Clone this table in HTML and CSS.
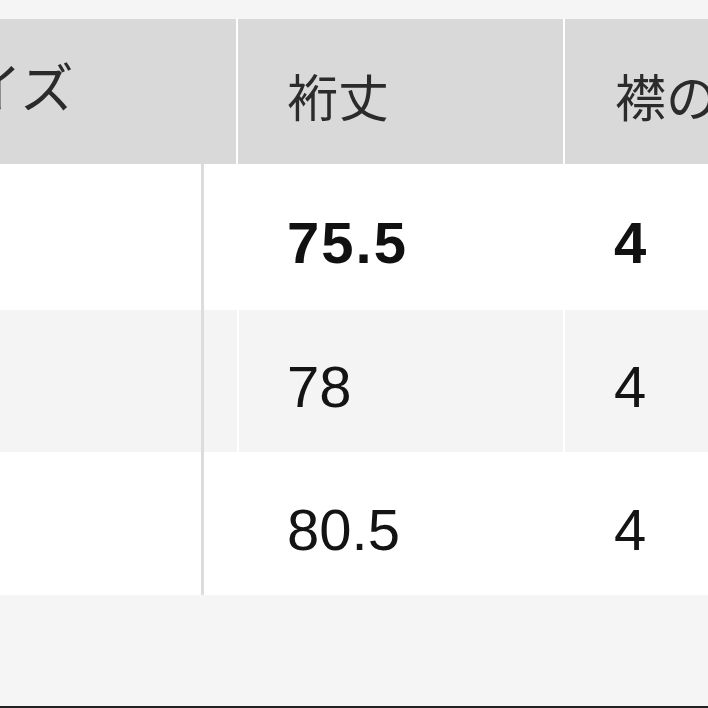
FILE: index.html
```html
<!DOCTYPE html>
<html lang="ja">
<head>
<meta charset="utf-8">
<title>サイズ表</title>
<link rel="stylesheet" href="styles.css">
</head>
<body>
<div class="page">
  <div class="strip"></div>
  <div class="head">
    <div class="hcell h0"><span class="h0text">サイズ</span></div>
    <div class="hcell">裄丈</div>
    <div class="hcell h2">襟の高さ</div>
  </div>
  <div class="row r1 bold">
    <div class="cell c0"></div>
    <div class="vline"></div>
    <div class="cell c1"></div>
    <div class="cell c2">75.5</div>
    <div class="cell c3">4</div>
  </div>
  <div class="row r2 alt">
    <div class="cell c0"></div>
    <div class="vline"></div>
    <div class="cell c1"></div>
    <div class="cell c2">78</div>
    <div class="cell c3">4</div>
  </div>
  <div class="row r3">
    <div class="cell c0"></div>
    <div class="vline"></div>
    <div class="cell c1"></div>
    <div class="cell c2">80.5</div>
    <div class="cell c3">4</div>
  </div>
  <div class="foot"></div>
</div>
</body>
</html>
```

FILE: styles.css
```css
* { box-sizing: border-box; }

html, body {
  margin: 0;
  padding: 0;
  background: #f5f5f5;
  overflow: hidden;
}

.page {
  width: 708px;
  height: 708px;
  display: flex;
  flex-direction: column;
  overflow: hidden;
  font-family: "Liberation Sans", Arial, sans-serif;
}

.strip {
  height: 19px;
  flex: none;
  background: #f5f5f5;
}

.head {
  height: 145px;
  flex: none;
  display: grid;
  grid-template-columns: 236px 325px 1fr;
  column-gap: 2px;
  background: #ffffff;
}

.hcell {
  background: #d9d9d9;
  display: flex;
  align-items: center;
  overflow: hidden;
  white-space: nowrap;
  font-family: "Noto Sans CJK JP", sans-serif;
  font-size: 51px;
  line-height: 1;
  color: #2b2b2b;
  padding-left: 49px;
  padding-top: 8px;
}

.hcell.h0 {
  padding-left: 0;
  padding-top: 0;
  padding-bottom: 12px;
  font-size: 53px;
}

.h0text {
  margin-left: -84px;
}

.hcell.h2 {
  padding-left: 50px;
}

.row {
  flex: none;
  display: grid;
  grid-template-columns: 201px 3px 35px 326px 1fr;
}

.r1 { height: 146px; }
.r2 { height: 142px; }
.r3 { height: 143px; }

.cell {
  background: #ffffff;
  display: flex;
  align-items: center;
  font-size: 58px;
  line-height: 1;
  color: #141414;
  padding-top: 12px;
  white-space: nowrap;
  overflow: hidden;
}

.row.alt .cell {
  background: #f4f4f4;
}

.bold .cell {
  font-weight: 700;
  color: #111111;
  letter-spacing: 2px;
}

.c1, .c2 {
  border-right: 2px solid #ffffff;
}

.c2 { padding-left: 48px; }
.c3 { padding-left: 49px; }

.vline {
  background: #dcdcdc;
}

.foot {
  flex: 1;
  background: #f5f5f5;
  border-bottom: 2px solid #222222;
}
```
